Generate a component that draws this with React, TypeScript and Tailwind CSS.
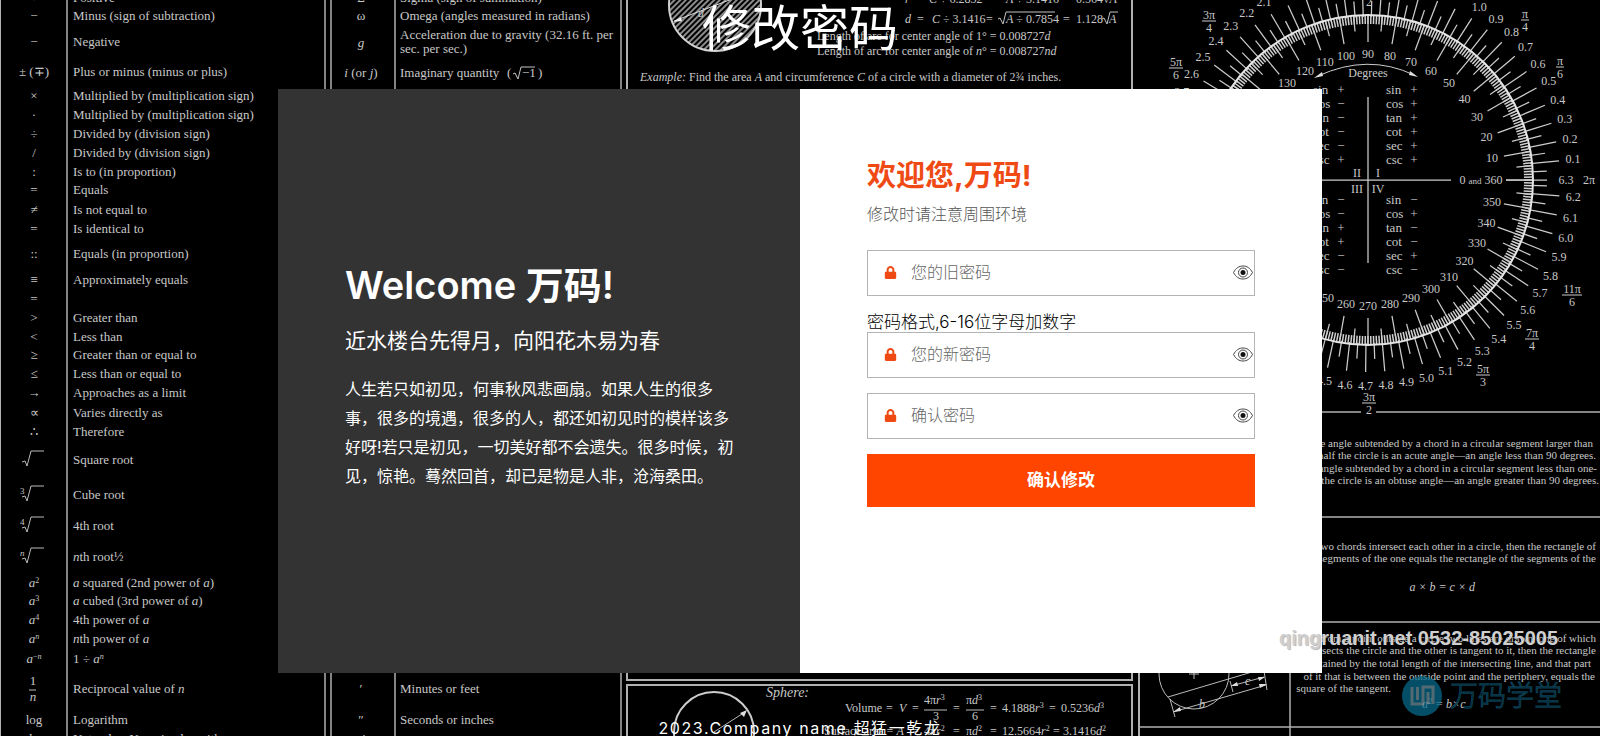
import type { ReactNode } from 'react';
import { FaLock } from 'react-icons/fa';

const Sup = ({ children }: { children: ReactNode }) => (
  <tspan baselineShift="super" fontSize="8">{children}</tspan>
);

const I = ({ children }: { children: ReactNode }) => <tspan fontStyle="italic">{children}</tspan>;

const symbolRows: { y: number; symbol?: ReactNode; text?: ReactNode; root?: ReactNode }[] = [
  { y: 2, symbol: '+', text: 'Positive' },
  { y: 20, symbol: '−', text: 'Minus (sign of subtraction)' },
  { y: 46, symbol: '−', text: 'Negative' },
  { y: 76, symbol: '± (∓)', text: 'Plus or minus (minus or plus)' },
  { y: 100, symbol: '×', text: 'Multiplied by (multiplication sign)' },
  { y: 119, symbol: '·', text: 'Multiplied by (multiplication sign)' },
  { y: 138, symbol: '÷', text: 'Divided by (division sign)' },
  { y: 157, symbol: '/', text: 'Divided by (division sign)' },
  { y: 176, symbol: ':', text: 'Is to (in proportion)' },
  { y: 194, symbol: '=', text: 'Equals' },
  { y: 214, symbol: '≠', text: 'Is not equal to' },
  { y: 233, symbol: '=', text: 'Is identical to' },
  { y: 258, symbol: '::', text: 'Equals (in proportion)' },
  { y: 284, symbol: '≡', text: 'Approximately equals' },
  { y: 303, symbol: '=' },
  { y: 322, symbol: '>', text: 'Greater than' },
  { y: 341, symbol: '<', text: 'Less than' },
  { y: 359, symbol: '≥', text: 'Greater than or equal to' },
  { y: 378, symbol: '≤', text: 'Less than or equal to' },
  { y: 397, symbol: '→', text: 'Approaches as a limit' },
  { y: 417, symbol: '∝', text: 'Varies directly as' },
  { y: 436, symbol: '∴', text: 'Therefore' },
  { y: 464, root: '', text: 'Square root' },
  { y: 499, root: '3', text: 'Cube root' },
  { y: 530, root: '4', text: '4th root' },
  { y: 561, root: <I>n</I>, text: <><I>n</I>th root½</> },
  { y: 587, symbol: <><I>a</I><Sup>2</Sup></>, text: <><I>a</I> squared (2nd power of <I>a</I>)</> },
  { y: 605, symbol: <><I>a</I><Sup>3</Sup></>, text: <><I>a</I> cubed (3rd power of <I>a</I>)</> },
  { y: 624, symbol: <><I>a</I><Sup>4</Sup></>, text: <>4th power of <I>a</I></> },
  { y: 643, symbol: <><I>a</I><Sup><I>n</I></Sup></>, text: <><I>n</I>th power of <I>a</I></> },
  { y: 663, symbol: <><I>a</I><Sup>−<I>n</I></Sup></>, text: <>1 ÷ <I>a</I><Sup><I>n</I></Sup></> },
  { y: 693, text: <>Reciprocal value of <I>n</I></> },
  { y: 724, symbol: 'log', text: 'Logarithm' },
  { y: 743, symbol: 'ln', text: 'Natural or Naperian logarithm' },
];

const CX = 1368;
const CY = 180;

const polar = (r: number, angle: number) => ({
  x: CX + r * Math.cos(angle),
  y: CY - r * Math.sin(angle),
});

function Tick({ angle, from, to }: { angle: number; from: number; to: number }) {
  const a = polar(from, angle);
  const b = polar(to, angle);
  return <line x1={a.x} y1={a.y} x2={b.x} y2={b.y} />;
}

const degreeLabels = Array.from({ length: 35 }, (_, i) => (i + 1) * 10);
const radianLabels = Array.from({ length: 62 }, (_, i) => (i + 1) / 10);

const fractions = [
  { x: 1209, y: 21, top: '3π', bottom: '4' },
  { x: 1176, y: 68, top: '5π', bottom: '6' },
  { x: 1525, y: 20, top: 'π', bottom: '4' },
  { x: 1560, y: 67, top: 'π', bottom: '6' },
  { x: 1572, y: 295, top: '11π', bottom: '6' },
  { x: 1532, y: 339, top: '7π', bottom: '4' },
  { x: 1483, y: 375, top: '5π', bottom: '3' },
  { x: 1369, y: 403, top: '3π', bottom: '2' },
];

const functionNames = ['sin', 'cos', 'tan', 'cot', 'sec', 'csc'];
const quadrants = [
  { x: 1386, y: 94, signs: '++++++' },
  { x: 1313, y: 94, signs: '+−−−−+' },
  { x: 1313, y: 204, signs: '−−++−−' },
  { x: 1386, y: 204, signs: '−+−−+−' },
];

function Protractor() {
  return (
    <g>
      <g stroke="#d0d0d0" strokeWidth="1.5">
        {Array.from({ length: 360 }, (_, i) => (
          <Tick key={i} angle={(i * Math.PI) / 180} from={156} to={165} />
        ))}
      </g>
      <g stroke="#cccccc" strokeWidth="1.25">
        {Array.from({ length: 36 }, (_, i) => (
          <Tick key={i} angle={(i * Math.PI) / 18} from={138} to={165} />
        ))}
        {Array.from({ length: 36 }, (_, i) => (
          <Tick key={i} angle={((i * 10 + 5) * Math.PI) / 180} from={149} to={165} />
        ))}
        {radianLabels.map((r) => (
          <Tick key={r} angle={r} from={163} to={192} />
        ))}
        {Array.from({ length: 63 }, (_, i) => (
          <Tick key={i} angle={i / 10 + 0.05} from={163} to={179} />
        ))}
        <path d="M1506 180H1547M1368 97V263M1300 180H1451" />
      </g>
      <circle cx={CX} cy={CY} r="165" fill="none" stroke="#e5e5e5" strokeWidth="2" />

      <g textAnchor="middle">
        {degreeLabels.map((d) => {
          const p = polar(126, (d * Math.PI) / 180);
          return <text key={d} x={p.x} y={p.y + 4}>{d}</text>;
        })}
        {radianLabels.map((r) => {
          const p = polar(206, r);
          return <text key={r} x={p.x} y={p.y + 4}>{r.toFixed(1)}</text>;
        })}
        <text x="1566" y="184">6.3</text>
        <text x="1589" y="184">2π</text>
        <text x="1481" y="184">0 <tspan fontSize="9">and</tspan> 360</text>
        <text x="1368" y="77">Degrees</text>
        <text x="1357" y="177">II</text>
        <text x="1378" y="177">I</text>
        <text x="1357" y="193">III</text>
        <text x="1378" y="193">IV</text>
        <text x="1369" y="6">2</text>
        {fractions.map((f, i) => (
          <g key={i}>
            <text x={f.x} y={f.y - 2}>{f.top}</text>
            <line x1={f.x - 3 * f.top.length - 1} y1={f.y} x2={f.x + 3 * f.top.length + 1} y2={f.y} stroke="#ccc" />
            <text x={f.x} y={f.y + 11}>{f.bottom}</text>
          </g>
        ))}
      </g>

      <path d="M1318 76 Q1368 53 1414 75" fill="none" stroke="#ccc" />
      <path d="M1314 78 l8 -6 l1 4 z M1418 77 l-8 -6 l-1 4 z" fill="#ddd" />

      {quadrants.map((q, n) =>
        functionNames.map((name, i) => (
          <g key={`${n}-${name}`}>
            <text x={q.x} y={q.y + i * 14} fontSize="13">{name}</text>
            <text x={q.x + 28} y={q.y + i * 14} fontSize="13" textAnchor="middle">{q.signs[i]}</text>
          </g>
        )),
      )}
    </g>
  );
}

function Radical({ x, y, width }: { x: number; y: number; width: number }) {
  return (
    <path d={`M${x} ${y - 4} l2 -1 l3 6 l3 -12 h${width}`} fill="none" stroke="#c4c4c4" />
  );
}

function Blackboard() {
  return (
    <svg
      className="absolute inset-0 size-full font-['Liberation_Serif',serif]"
      viewBox="0 0 1600 736"
      preserveAspectRatio="xMidYMin slice"
      fontSize="12"
      fill="#c8c8c8"
      aria-hidden="true"
    >
      <defs>
        <pattern id="hatch" width="4" height="4" patternUnits="userSpaceOnUse" patternTransform="rotate(45)">
          <rect width="2" height="4" fill="#8c8c8c" />
        </pattern>
      </defs>

      {/* table rules */}
      <g stroke="#b0b0b0" strokeWidth="2" fill="none">
        <path d="M0 0V736" />
        <path d="M67 0V736M325 0V736M331 0V736M395 0V736M621 0V736" strokeWidth="1.5" />
        <path d="M627 0V680H1132V0M1139 670V736M627 736V685H1132V736" />
        <path d="M1300 412H1361M1376 412H1600M1300 517H1600M1300 622H1600M1139 727H1600M1290 670V736" strokeWidth="1.5" />
      </g>

      <g fontSize="13">
        {symbolRows.map((row) => (
          <g key={row.y}>
            {row.root !== undefined ? (
              <g>
                <text x="20" y={row.y - 5} fontSize="9">{row.root}</text>
                <path d={`M22 ${row.y - 2}l3 -1l2 5l4 -15h13`} fill="none" stroke="#bbb" />
              </g>
            ) : (
              <text x="34" y={row.y} textAnchor="middle">{row.symbol}</text>
            )}
            <text x="73" y={row.y}>{row.text}</text>
          </g>
        ))}
        <g textAnchor="middle">
          <text x="33" y="685">1</text>
          <path d="M29 690h7" stroke="#bbb" />
          <text x="33" y="701" fontStyle="italic">n</text>
        </g>

        <text x="361" y="2" textAnchor="middle">Σ</text>
        <text x="400" y="2">Sigma (sign of summation)</text>
        <text x="361" y="20" textAnchor="middle">ω</text>
        <text x="400" y="20">Omega (angles measured in radians)</text>
        <text x="361" y="47" textAnchor="middle" fontStyle="italic">g</text>
        <text x="400" y="39">Acceleration due to gravity (32.16 ft. per</text>
        <text x="400" y="53">sec. per sec.)</text>
        <text x="361" y="77" textAnchor="middle"><I>i</I> (or <I>j</I>)</text>
        <text x="400" y="77">Imaginary quantity</text>
        <text x="507" y="77">(</text>
        <Radical x={513} y={78} width={14} />
        <text x="522" y="77">−1</text>
        <text x="538" y="77">)</text>
        <text x="361" y="693" textAnchor="middle">′</text>
        <text x="400" y="693">Minutes or feet</text>
        <text x="361" y="724" textAnchor="middle">″</text>
        <text x="400" y="724">Seconds or inches</text>
        <text x="364" y="743" textAnchor="middle">′</text>
      </g>

      {/* circle formulas */}
      <circle cx="715" cy="5" r="46" fill="url(#hatch)" stroke="#d0d0d0" strokeWidth="2" />
      <path d="M674 21L740 -4" stroke="#ddd" />
      <path d="M673 22l8 -5l1 4z" fill="#eee" />
      <text x="698" y="17" fontStyle="italic">d</text>
      <g>
        <text x="905" y="3" fontStyle="italic">r</text>
        <text x="917" y="3">=</text>
        <text x="929" y="3"><I>C</I> ÷ 6.2832</text>
        <text x="986" y="3">=</text>
        <text x="1006" y="3"><I>A</I> ÷ 3.1416</text>
        <text x="1063" y="3">=</text>
        <text x="1076" y="3">0.564√<I>A</I></text>
        <text x="905" y="23" fontStyle="italic">d</text>
        <text x="917" y="23">=</text>
        <text x="932" y="23"><I>C</I> ÷ 3.1416</text>
        <text x="986" y="23">=</text>
        <Radical x={998} y={23} width={49} />
        <text x="1006" y="23"><I>A</I> ÷ 0.7854</text>
        <text x="1063" y="23">=</text>
        <text x="1076" y="23">1.128</text>
        <Radical x={1102} y={23} width={8} />
        <text x="1109" y="23" fontStyle="italic">A</text>
        <text x="817" y="40">Length of arc for center angle of 1° = 0.008727<I>d</I></text>
        <text x="817" y="55">Length of arc for center angle of <I>n</I>° = 0.008727<I>nd</I></text>
        <text x="640" y="81">
          <I>Example:</I> Find the area <I>A</I> and circumference <I>C</I> of a circle with a diameter of 2¾ inches.
        </text>
      </g>

      {/* sphere formulas */}
      <circle cx="714" cy="732" r="40" fill="none" stroke="#ccc" strokeWidth="2" />
      <path d="M714 732L745 712" stroke="#bbb" />
      <path d="M747 710l-3 7l-4 -4z" fill="#ddd" />
      <text x="766" y="697" fontSize="14" fontStyle="italic">Sphere:</text>
      <g>
        <text x="845" y="712">Volume</text>
        <text x="886" y="712">=</text>
        <text x="899" y="712" fontStyle="italic">V</text>
        <text x="912" y="712">=</text>
        <text x="924" y="704">4π<I>r</I><Sup>3</Sup></text>
        <path d="M924 710h23M966 710h18" stroke="#bbb" />
        <text x="933" y="720">3</text>
        <text x="953" y="712">=</text>
        <text x="966" y="704">π<I>d</I><Sup>3</Sup></text>
        <text x="972" y="720">6</text>
        <text x="990" y="712">=</text>
        <text x="1002" y="712">4.1888<I>r</I><Sup>3</Sup></text>
        <text x="1049" y="712">=</text>
        <text x="1061" y="712">0.5236<I>d</I><Sup>3</Sup></text>
        <text x="824" y="735">Surface area = <I>A</I></text>
        <text x="912" y="735">=</text>
        <text x="924" y="735">4π<I>r</I><Sup>2</Sup></text>
        <text x="953" y="735">=</text>
        <text x="966" y="735">π<I>d</I><Sup>2</Sup></text>
        <text x="990" y="735">=</text>
        <text x="1002" y="735">12.5664<I>r</I><Sup>2</Sup></text>
        <text x="1053" y="735">=</text>
        <text x="1063" y="735">3.1416<I>d</I><Sup>2</Sup></text>
      </g>

      <Protractor />

      {/* chord theorems */}
      <g fontSize="11" textAnchor="end">
        <text x="1593" y="447">The angle subtended by a chord in a circular segment larger than</text>
        <text x="1596" y="459">one-half the circle is an acute angle—an angle less than 90 degrees.</text>
        <text x="1597" y="472">An angle subtended by a chord in a circular segment less than one-</text>
        <text x="1599" y="484">half the circle is an obtuse angle—an angle greater than 90 degrees.</text>
        <text x="1596" y="550">If two chords intersect each other in a circle, then the rectangle of</text>
        <text x="1596" y="562">the segments of the one equals the rectangle of the segments of the</text>
        <text x="1475" y="591" fontSize="12" fontStyle="italic">a × b = c × d</text>
        <text x="1596" y="642">If from a point outside a circle two lines are drawn, one of which</text>
        <text x="1596" y="654">intersects the circle and the other is tangent to it, then the rectangle</text>
        <text x="1591" y="667">contained by the total length of the intersecting line, and that part</text>
        <text x="1595" y="680">of it that is between the outside point and the periphery, equals the</text>
        <text x="1391" y="692">square of the tangent.</text>
      </g>
      <g fill="none" stroke="#bbb">
        <circle cx="1194" cy="674" r="35" />
        <path d="M1189 674h10M1194 669v10M1168 697L1252 672M1173 712L1266 685M1231 686L1264 677M1170 699L1175 717M1264 671L1267 690M1230 681L1233 692" />
      </g>
      <path d="M1173 712l7 -5l1 4zM1267 684l-8 0l1 4zM1231 686l6 -4l1 4zM1265 677l-7 0l1 4z" fill="#ddd" />
      <text x="1199" y="708" fontStyle="italic">b</text>
      <text x="1245" y="685" fontStyle="italic">c</text>
      <text x="1422" y="708" fontStyle="italic">a<Sup>2</Sup> = b×c</text>
    </svg>
  );
}

function EyeIcon() {
  return (
    <svg width="20" height="15" viewBox="0 0 20 15" fill="none" stroke="#444" strokeWidth="1">
      <path d="M.5 7.500C3 3 6 1 10 1s7 2 9.500 6.500C17 12 14 14 10 14S3 12 .5 7.500Z" />
      <circle cx="10" cy="7.500" r="4.500" />
      <circle cx="10" cy="7.500" r="2.500" fill="#111" stroke="none" />
    </svg>
  );
}

function PasswordField({ id, placeholder }: { id: string; placeholder: string }) {
  return (
    <div className="flex h-[46px] items-center border border-[#b4b4b4] bg-white pr-px pb-0.5 pl-4">
      <label htmlFor={id} className="text-[#f04a14]" aria-label={placeholder}>
        <FaLock size={13} />
      </label>
      <input
        id={id}
        type="password"
        placeholder={placeholder}
        className="min-w-0 flex-1 px-3.5 text-base font-light text-black outline-none placeholder:text-[#666]"
      />
      <button type="button" aria-label="显示密码">
        <EyeIcon />
      </button>
    </div>
  );
}

export default function App() {
  return (
    <div className="relative flex min-h-screen flex-col overflow-hidden bg-black font-[Inter,'Noto_Sans_CJK_SC',sans-serif]">
      <Blackboard />

      <h1 className="relative pb-8 text-center text-[49px] leading-[57px] text-white">修改密码</h1>

      <main className="relative mx-auto grid min-h-[584px] w-full max-w-[1044px] grid-cols-2">
        <section className="flex flex-col justify-center bg-[#333] pr-[60px] pb-2.5 pl-[67px] text-white">
          <h2 className="text-[38px] leading-[48px] font-semibold">Welcome 万码!</h2>
          <h3 className="mt-4 text-[21px] leading-8">近水楼台先得月，向阳花木易为春</h3>
          <p className="mt-[18px] text-base leading-[29px]">
            人生若只如初见，何事秋风悲画扇。如果人生的很多事，很多的境遇，很多的人，都还如初见时的模样该多好呀!若只是初见，一切美好都不会遗失。很多时候，初见，惊艳。蓦然回首，却已是物是人非，沧海桑田。
          </p>
        </section>

        <section className="bg-white px-[67px] pt-[67px]">
          <h2 className="text-[29px] leading-10 font-bold text-[#f04a14]">欢迎您,万码!</h2>
          <p className="mt-1.5 text-base leading-6 font-light text-[#555]">修改时请注意周围环境</p>
          <form className="mt-6">
            <PasswordField id="old-password" placeholder="您的旧密码" />
            <label htmlFor="new-password" className="mt-4 block text-[17px] leading-5 font-light text-black">
              密码格式,6-16位字母加数字
            </label>
            <PasswordField id="new-password" placeholder="您的新密码" />
            <div className="mt-[15px]">
              <PasswordField id="confirm-password" placeholder="确认密码" />
            </div>
            <button type="submit" className="mt-[15px] h-[53px] w-full bg-[#ff4500] text-[17px] font-bold text-white">
              确认修改
            </button>
          </form>
        </section>
      </main>

      <footer className="relative mt-auto text-center text-base leading-4 tracking-widest text-white">
        2023.Company name 超猛一乾龙
      </footer>

      {/* site watermark */}
      <div className="pointer-events-none absolute right-[38px] bottom-5 flex flex-col items-end gap-6">
        <p className="mr-1 font-['Liberation_Sans',sans-serif] text-xl leading-7 font-bold whitespace-nowrap text-[#cfcfcf] text-shadow-[1px_1px_1px_rgb(0_0_0/0.3)]">
          qingruanit.net 0532-85025005
        </p>
        <div className="flex items-center gap-2">
          <svg width="40" height="40" viewBox="0 0 40 40" fill="none" opacity="0.75">
            <circle cx="20" cy="20" r="20" fill="#066a8a" />
            <path d="M10 11V28H21V11M15.500 11V24M21 28V11H31V28M26 16V28" stroke="#6d8c98" strokeWidth="3" />
          </svg>
          <svg width="112" height="40" viewBox="0 0 112 40">
            <text x="0" y="30" fontSize="28" fontWeight="300" fill="#000" fillOpacity="0.4" stroke="#0b4156" strokeWidth="1">
              万码学堂
            </text>
          </svg>
        </div>
      </div>
    </div>
  );
}
